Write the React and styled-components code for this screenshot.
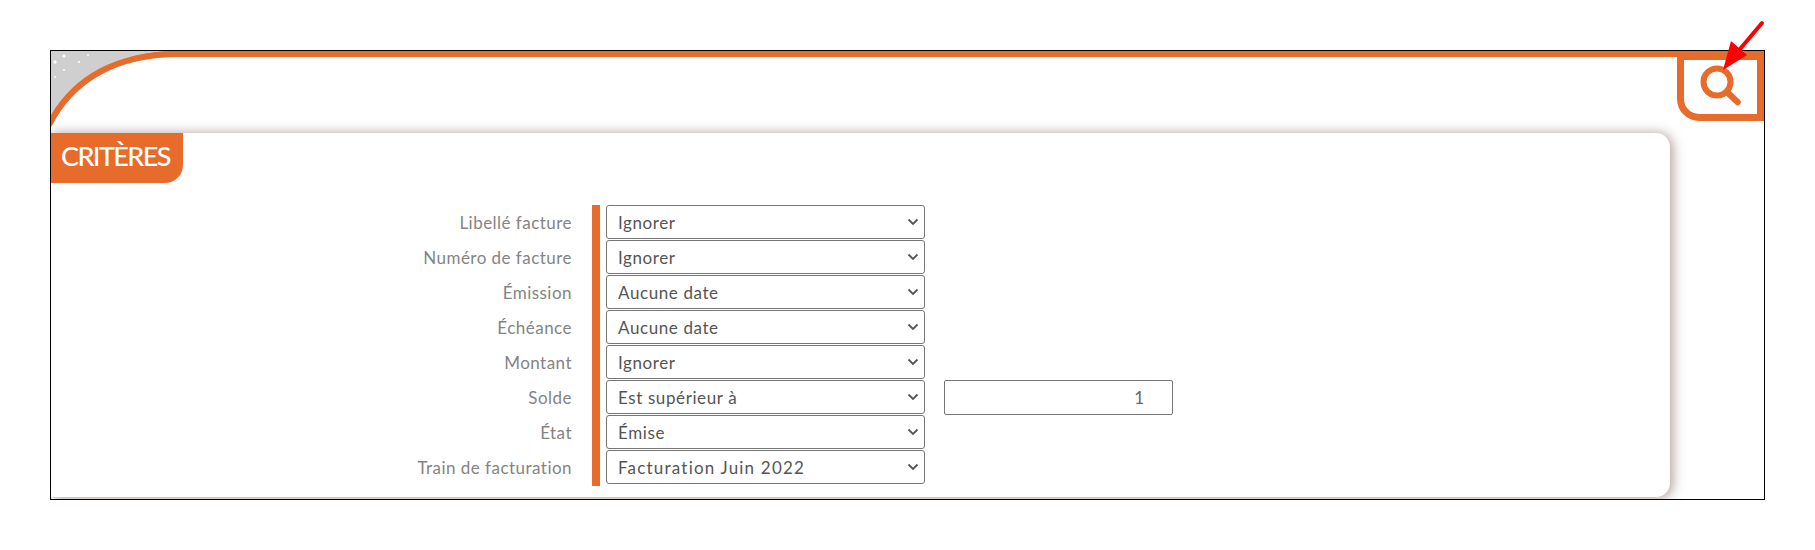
import React from "react";
import styled, { createGlobalStyle } from "styled-components";

const ORANGE = "#e76c2b";
const FONT = `"Lato", "Liberation Sans", sans-serif`;
const CHEVRON = `url("data:image/svg+xml,%3Csvg xmlns='http://www.w3.org/2000/svg' width='12' height='8' viewBox='0 0 12 8'%3E%3Cpath d='M1.5 1.5L6 6L10.5 1.5' fill='none' stroke='%23555' stroke-width='1.8'/%3E%3C/svg%3E")`;

const Global = createGlobalStyle`
  html, body { margin: 0; background: #fff; }
  body { font-family: ${FONT}; }
`;
const Page = styled.div`
  position: relative;
  padding: 50px;
  box-sizing: border-box;
  width: 1815px;
  height: 550px;
  overflow: hidden;
`;
const Frame = styled.section`
  box-sizing: border-box;
  width: 1715px;
  height: 450px;
  border: 1px solid #000;
  overflow: hidden;
  background: #fff;
`;
const Header = styled.header`
  position: relative;
  box-sizing: border-box;
  height: 82px;
  border-top: 6px solid ${ORANGE};
  display: flex;
  justify-content: flex-end;
  align-items: flex-start;
`;
const Corner = styled.svg`
  position: absolute;
  left: 0;
  top: -6px;
`;
const SearchButton = styled.button`
  box-sizing: border-box;
  width: 87px;
  height: 64px;
  padding: 0;
  background: #fff;
  border-style: solid;
  border-color: ${ORANGE};
  border-width: 3px 7px 7px 7px;
  border-bottom-left-radius: 22px;
  display: flex;
  align-items: center;
  justify-content: center;
`;
const Card = styled.div`
  box-sizing: border-box;
  width: 1619px;
  height: 364px;
  background: #fff;
  border-radius: 0 14px 14px 0;
  box-shadow: 2px 1px 12px 1px rgba(120, 85, 80, 0.55);
`;
const Tab = styled.h2`
  box-sizing: border-box;
  margin: 0;
  width: 132px;
  height: 50px;
  padding-left: 10px;
  background: ${ORANGE};
  color: #fff;
  font: 500 27px/46px ${FONT};
  letter-spacing: -1.6px;
  border-bottom-right-radius: 18px;
`;
const Form = styled.form`
  padding-top: 22px;
`;
const Row = styled.div`
  display: grid;
  grid-template-columns: 541px 1fr;
  height: 35px;
  &:last-child {
    height: 34px;
  }
`;
const Label = styled.label`
  padding-right: 20px;
  text-align: right;
  color: #848484;
  font: 400 17px/36px ${FONT};
  letter-spacing: 0.47px;
`;
const Field = styled.div`
  display: flex;
  gap: 19px;
  padding-left: 6px;
  border-left: 8px solid ${ORANGE};
`;
const Select = styled.select`
  box-sizing: border-box;
  width: 319px;
  height: 34px;
  padding: 0 24px 0 11px;
  appearance: none;
  background: #fff ${CHEVRON} no-repeat right 5px center;
  border: 1px solid #767676;
  border-radius: 3px;
  color: #555;
  font: 400 17px ${FONT};
  letter-spacing: ${(p) => p.$spacing}px;
`;
const NumberInput = styled.input`
  box-sizing: border-box;
  width: 229px;
  height: 35px;
  padding: 0 28px 0 0;
  text-align: right;
  background: #fff;
  border: 1px solid #767676;
  border-radius: 2px;
  color: #666;
  font: 400 17px ${FONT};
`;
const Arrow = styled.svg`
  position: absolute;
  left: 1715px;
  top: 15px;
`;

const rows = [
  ["Libellé facture", "Ignorer", 0.6],
  ["Numéro de facture", "Ignorer", 0.6],
  ["Émission", "Aucune date", 0.6],
  ["Échéance", "Aucune date", 0.6],
  ["Montant", "Ignorer", 0.6],
  ["Solde", "Est supérieur à", 0.6, true],
  ["État", "Émise", 0.6],
  ["Train de facturation", "Facturation Juin 2022", 1.2],
];
const dots = [[13, 5, 1.6], [37, 4, 1], [4, 11, 1.7], [28, 11, 1], [13, 19, 1], [4, 26, 1]];

export default function App() {
  return (
    <Page>
      <Global />
      <Frame>
        <Header>
          <Corner width="130" height="82" viewBox="0 0 130 82">
            <path d="M0 0H125C68 0 22 26 0 70Z" fill="#cfcfcf" />
            {dots.map(([cx, cy, r]) => (
              <circle key={`${cx}-${cy}`} cx={cx} cy={cy} r={r} fill="#fff" />
            ))}
            <path d="M-2 74C22 26 68 3 128 3" fill="none" stroke={ORANGE} strokeWidth="6" />
          </Corner>
          <SearchButton type="button" aria-label="Rechercher">
            <svg width="46" height="46" viewBox="0 0 46 46" fill="none" stroke={ORANGE} strokeLinecap="round">
              <circle cx="19" cy="18" r="13.5" strokeWidth="6" />
              <path d="M29 28L39.5 38" strokeWidth="6.5" />
            </svg>
          </SearchButton>
        </Header>
        <Card>
          <Tab>CRITÈRES</Tab>
          <Form>
            {rows.map(([label, value, spacing, extra]) => (
              <Row key={label}>
                <Label>{label}</Label>
                <Field>
                  <Select defaultValue={value} $spacing={spacing}>
                    <option>{value}</option>
                  </Select>
                  {extra && <NumberInput defaultValue="1" />}
                </Field>
              </Row>
            ))}
          </Form>
        </Card>
      </Frame>
      <Arrow width="60" height="65" viewBox="0 0 60 65">
        <path d="M47 8L20 40" stroke="#f00" strokeWidth="4" strokeLinecap="round" />
        <path d="M8 55L16 26L32 40Z" fill="#f00" />
      </Arrow>
    </Page>
  );
}
